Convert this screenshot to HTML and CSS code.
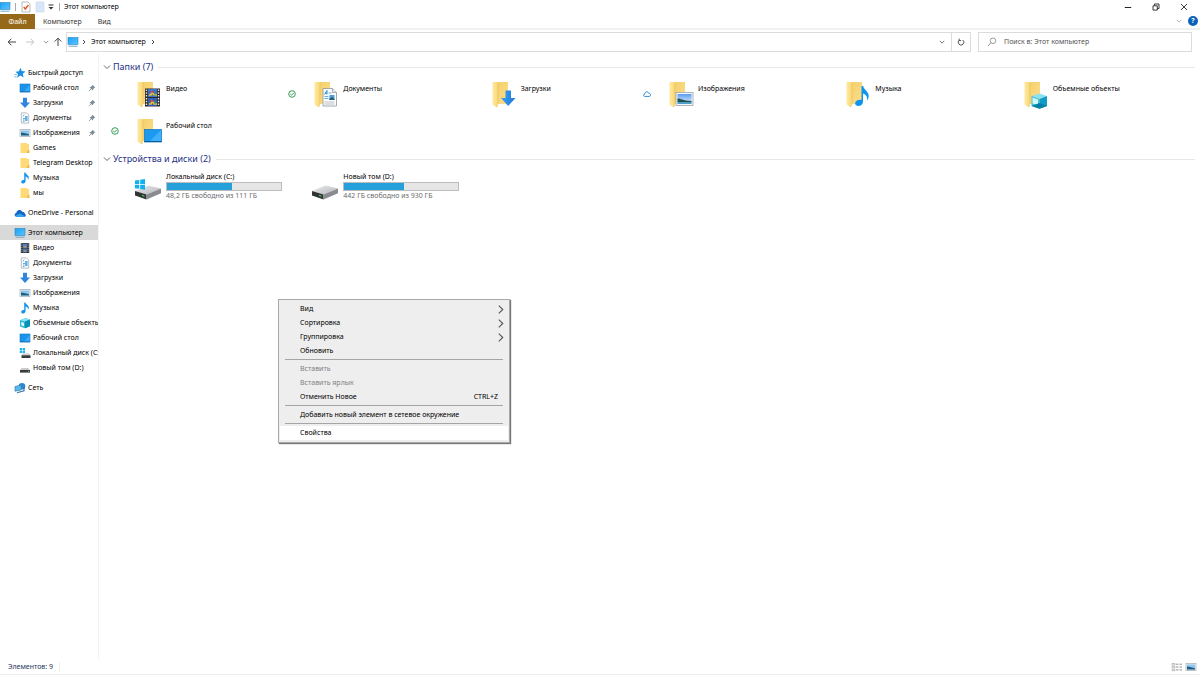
FILE: index.html
```html
<!DOCTYPE html>
<html lang="ru">
<head>
<meta charset="utf-8">
<title>Этот компьютер</title>
<link rel="stylesheet" href="styles.css">
</head>
<body>
<svg class="defs" aria-hidden="true">
  <defs>
    <linearGradient id="g-screen" x1="0" y1="0" x2="1" y2="1"><stop offset="0" stop-color="#18a0f5"/><stop offset="1" stop-color="#5cc6ff"/></linearGradient>
    <linearGradient id="g-flap" x1="0" y1="0" x2="1" y2="0"><stop offset="0" stop-color="#ffe9a3"/><stop offset="1" stop-color="#fbd775"/></linearGradient>
    <linearGradient id="g-back" x1="0" y1="0" x2="1" y2="1"><stop offset="0" stop-color="#f3cf6a"/><stop offset="1" stop-color="#fddf8b"/></linearGradient>
    <linearGradient id="g-drive" x1="0" y1="0" x2="1" y2="1"><stop offset="0" stop-color="#e9eaec"/><stop offset="1" stop-color="#b4b6ba"/></linearGradient>
    <linearGradient id="g-sky" x1="0" y1="0" x2="0" y2="1"><stop offset="0" stop-color="#5b9cf0"/><stop offset="1" stop-color="#e6f4fb"/></linearGradient>
    <linearGradient id="g-arrow" x1="0" y1="0" x2="1" y2="0"><stop offset="0" stop-color="#3aa0f3"/><stop offset="1" stop-color="#1f7ad6"/></linearGradient>
  </defs>
  <symbol id="pc" viewBox="0 0 12 10"><rect x="1" y=".5" width="10" height="7" fill="url(#g-screen)" stroke="#2c86bb" stroke-width=".6"/><path d="M1.500 9.200h9" stroke="#6fa7c8" stroke-width="1"/></symbol>
  <symbol id="star" viewBox="0 0 10 10"><path d="M5.400.6 6.500 3.400 9.600 3.700 7.300 5.700 8 8.700 5.300 7.100 2.600 8.900 3.300 5.800 1.200 3.900 4.100 3.500z" fill="#1c8fe3"/><path d="M.4 6.300h2M.2 8.200h2" stroke="#6bb8ef" stroke-width=".8"/></symbol>
  <symbol id="desktop" viewBox="0 0 12 10"><rect x="1" y="1" width="10" height="8" fill="#1b93ea" stroke="#1178c8" stroke-width=".6"/><path d="M5 8.500 10.700 2v6.500z" fill="#3aaaf6"/><path d="M1 8.800h10" stroke="#0b5fa5" stroke-width=".6"/></symbol>
  <symbol id="down" viewBox="0 0 12 12"><path d="M4 .8h4v4.700h3L6 11 1 5.500h3z" fill="#2f86dc"/></symbol>
  <symbol id="doc" viewBox="0 0 12 12"><path d="M2.300.9h5.400l2 2v8.200H2.300z" fill="#fff" stroke="#97a0a8" stroke-width=".7"/><path d="M4 4.500 5.200 2.600M4 6.500h4M4 8h1.500M4 9.500h1.500" stroke="#3794d1" stroke-width=".8"/><rect x="6" y="4" width="2.600" height="5" fill="#65b3e4"/></symbol>
  <symbol id="image" viewBox="0 0 12 10"><rect x="1" y="1.400" width="10" height="7.200" fill="#f4f6f8" stroke="#a3acb3" stroke-width=".7"/><rect x="2" y="2.400" width="8" height="5.200" fill="#8fc6ef"/><path d="M2 4.600 5 4.900l5 1.400v1.200H2z" fill="#1e5874"/><path d="M2 6.900h8v.7H2z" fill="#5fa4c6"/></symbol>
  <symbol id="folder" viewBox="0 0 12 12"><path d="M1.500 1H8v1h2v9H1.500z" fill="#ffda77"/><path d="M9 8h1.500v3H7.500z" fill="#eebc4b"/></symbol>
  <symbol id="music" viewBox="0 0 12 12"><path d="M5.200.6h1.200c.4 2 3.400 2.700 3.400 5 0 1-.4 1.700-.9 2.300.3-2-.7-3-2.300-3.400V9c0 1.500-1.200 2.400-2.500 2.400-1.200 0-1.900-.6-1.900-1.500C2.200 8.500 3.900 7.800 5.200 8.100z" fill="#1594ee"/></symbol>
  <symbol id="video" viewBox="0 0 12 12"><rect x="1.800" y="1" width="8.400" height="10" fill="#343434"/><rect x="3.800" y="1.700" width="4.400" height="4" fill="#547fc2"/><rect x="3.800" y="6.400" width="4.400" height="4" fill="#416cb0"/><path d="M4.500 5h3M4.500 9h3" stroke="#dfb04c"/><path d="M2.800 1.500v9M9.200 1.500v9" stroke="#c8ced5" stroke-width=".8" stroke-dasharray=".9 .9"/></symbol>
  <symbol id="cloud" viewBox="0 0 12 10"><path d="M2.700 8.800C.2 8.800-.1 5.400 2.300 4.900 2.600 1.700 6.800.9 8.200 3.700c2 0 2.600 1.100 2.700 2 1.500.8 1 3.100-.8 3.100z" fill="#1168c4"/><path d="M1.200 7.700 6 5.600l4.800 2.600c-.2.400-.5.600-.9.600H2.700c-.7 0-1.200-.5-1.500-1.100z" fill="#35a3ee"/></symbol>
  <symbol id="cube" viewBox="0 0 12 12"><path d="M1 3.200 6.500 1 11 2.500v6.700L6 11.300 1 9.500z" fill="#27b6d3"/><path d="M1 3.200 6.500 1 11 2.500 6 4.500z" fill="#8be4f2"/><path d="M6 4.500 11 2.500v6.700L6 11.300z" fill="#0a8fb5"/><path d="M2.200 5 5 5.800v3.400l-2.800-.7z" fill="#d8f7fb"/></symbol>
  <symbol id="disk" viewBox="0 0 12 12"><path d="M2.500 6h7l1.500 2.500H1z" fill="#c8cacc"/><rect x="1" y="8" width="10" height="2.600" fill="#373b3d"/><circle cx="9.500" cy="9.300" r=".6" fill="#5fdd5f"/></symbol>
  <symbol id="sysdisk" viewBox="0 0 12 12"><path d="M.8 1h2.300v2.200H.8zM3.700 1H6v2.200H3.700zM.8 3.800h2.300V6H.8zM3.700 3.800H6V6H3.700z" fill="#18b1ef"/><path d="M3.500 6.500h6.700l1.300 2H2.500z" fill="#c8cacc"/><rect x="2.500" y="8.300" width="9" height="2.700" fill="#373b3d"/></symbol>
  <symbol id="net" viewBox="0 0 12 12"><circle cx="8" cy="4.200" r="3.300" fill="#2b89d0"/><path d="M1 4.500 7.200 3v5L1 9.200z" fill="#57b9ed" stroke="#2674a8" stroke-width=".6"/><path d="M3 10.800 10 8.700V5.200" fill="none" stroke="#397ba9" stroke-width="1.200"/></symbol>
  <symbol id="pin" viewBox="0 0 8 8"><path d="M4.500.7 7.300 3.500 6.500 3.800 5.100 5.200 4.800 6.600 1.400 3.200 2.800 2.900 4.200 1.500z" fill="#7d8e99"/><path d="M3 5 .9 7.100" stroke="#7d8e99" stroke-width=".8"/></symbol>
  <symbol id="chev-d" viewBox="0 0 8 8"><path d="M1 2.500 4 5.500 7 2.500" fill="none" stroke="currentColor"/></symbol>
  <symbol id="chev-r" viewBox="0 0 8 8"><path d="M2.500.5 6 4 2.500 7.500" fill="none" stroke="currentColor"/></symbol>
  <symbol id="chev-s" viewBox="0 0 6 6"><path d="M2 1 4 3 2 5" fill="none" stroke="currentColor"/></symbol>
  <symbol id="synced" viewBox="0 0 8 8"><circle cx="4" cy="4" r="3.300" fill="#fff" stroke="#219441" stroke-width=".9"/><path d="M2.300 4 3.600 5.200 5.800 2.900" fill="none" stroke="#219441" stroke-width=".9"/></symbol>
  <symbol id="online" viewBox="0 0 8 8"><path d="M2 6.400C.2 6.400.1 4.200 1.700 4 1.900 1.400 4.900 1 5.600 3.200 8.200 3.100 8.200 6.400 6.100 6.400z" fill="#fff" stroke="#1c7fd0" stroke-width=".9"/></symbol>
  <symbol id="big-folder" viewBox="0 0 28 28"><path d="M9 1h10v22H7z" fill="url(#g-back)"/><path d="M3.500 1H9v21l-1.200 4.500-4.300-3z" fill="url(#g-flap)"/><path d="M9 2v20l-1.200 4" fill="none" stroke="#e6bd58" stroke-width=".6"/></symbol>
  <symbol id="big-drive" viewBox="0 0 28 28"><path d="M1 17 14.500 11.500 27 14.500 12.500 20.500z" fill="url(#g-drive)"/><path d="M1 17 12.500 20.500v5L1 21.500z" fill="#303234"/><path d="M12.500 20.500 27 14.500v4.700l-14.500 6.300z" fill="#898b90"/><path d="M8 21.400 10.500 22.200" stroke="#42ce52" stroke-width="1.200"/></symbol>
</svg>

<header class="titlebar">
  <svg class="ic app"><use href="#pc"/></svg>
  <span class="bar"></span>
  <svg class="ic check" viewBox="0 0 12 12"><path d="M2 1h6l2 2v8H2z" fill="#fff" stroke="#9b9fa4" stroke-width=".7"/><path d="M3.700 6 5.300 8 8.400 4" fill="none" stroke="#e0582d" stroke-width="1.400"/></svg>
  <svg class="ic" viewBox="0 0 12 12"><path d="M2 1h8v10H2z" fill="#d8e6f8" stroke="#c6d6ea" stroke-width=".6"/></svg>
  <svg class="mini" viewBox="0 0 8 8"><path d="M1.500 2h5" stroke="#333"/><path d="M1.500 4h5L4 6.500z" fill="#333"/></svg>
  <span class="bar"></span>
  <h1 class="title">Этот компьютер</h1>
  <div class="window-buttons">
    <button aria-label="Свернуть"><svg viewBox="0 0 8 8"><path d="M.8 4.500h6.400" stroke="#222"/></svg></button>
    <button aria-label="Свернуть в окно"><svg viewBox="0 0 8 8"><path d="M1 2.800h4.300v4.300H1zM2.500 2.500V1H7v4.500H5.500" fill="none" stroke="#222" stroke-width=".9"/></svg></button>
    <button aria-label="Закрыть"><svg viewBox="0 0 8 8"><path d="M1 1 7 7M7 1 1 7" stroke="#222" stroke-width=".9"/></svg></button>
  </div>
</header>

<nav class="ribbon">
  <button class="tab file">Файл</button>
  <button class="tab">Компьютер</button>
  <button class="tab">Вид</button>
  <div class="ribbon-end">
    <button class="expand" aria-label="Развернуть ленту"><svg class="tiny"><use href="#chev-d"/></svg></button>
    <button class="help" aria-label="Справка">?</button>
  </div>
</nav>

<div class="toolbar">
  <div class="history">
    <button aria-label="Назад"><svg viewBox="0 0 10 10"><path d="M9 5H1.200M4.300 1.700 1.200 5 4.300 8.300" fill="none" stroke="#444"/></svg></button>
    <button aria-label="Вперед"><svg viewBox="0 0 10 10"><path d="M1 5h7.800M5.700 1.700 8.800 5 5.700 8.300" fill="none" stroke="#c6c6c6"/></svg></button>
    <button class="recent" aria-label="Последние"><svg class="tiny"><use href="#chev-d"/></svg></button>
    <button aria-label="Вверх"><svg viewBox="0 0 10 10"><path d="M5 9V1.200M1.700 4.500 5 1.200 8.300 4.500" fill="none" stroke="#444"/></svg></button>
  </div>
  <div class="address">
    <svg class="ic"><use href="#pc"/></svg>
    <svg class="tiny"><use href="#chev-s"/></svg>
    <a class="crumb" href="#">Этот компьютер</a>
    <svg class="tiny"><use href="#chev-s"/></svg>
    <button class="drop" aria-label="Предыдущие расположения"><svg class="tiny"><use href="#chev-d"/></svg></button>
    <button class="refresh" aria-label="Обновить"><svg viewBox="0 0 8 8"><path d="M5.800 2.100A2.800 2.800 0 1 1 2.400 2M2.200.6v2h2" fill="none" stroke="#444" stroke-width=".9"/></svg></button>
  </div>
  <label class="search">
    <svg viewBox="0 0 10 10"><circle cx="6" cy="3.800" r="2.800" fill="none" stroke="#777" stroke-width=".7"/><path d="M4 5.800 1 9" stroke="#777" stroke-width=".8"/></svg>
    <input type="search" aria-label="Поиск" placeholder="Поиск в: Этот компьютер">
  </label>
</div>

<div class="body">
  <aside class="tree">
    <div class="branch">
      <a class="node root" href="#"><svg class="ic"><use href="#star"/></svg><span>Быстрый доступ</span></a>
      <a class="node" href="#"><svg class="ic"><use href="#desktop"/></svg><span>Рабочий стол</span><svg class="pin"><use href="#pin"/></svg></a>
      <a class="node" href="#"><svg class="ic"><use href="#down"/></svg><span>Загрузки</span><svg class="pin"><use href="#pin"/></svg></a>
      <a class="node" href="#"><svg class="ic"><use href="#doc"/></svg><span>Документы</span><svg class="pin"><use href="#pin"/></svg></a>
      <a class="node" href="#"><svg class="ic"><use href="#image"/></svg><span>Изображения</span><svg class="pin"><use href="#pin"/></svg></a>
      <a class="node" href="#"><svg class="ic"><use href="#folder"/></svg><span>Games</span></a>
      <a class="node" href="#"><svg class="ic"><use href="#folder"/></svg><span>Telegram Desktop</span></a>
      <a class="node" href="#"><svg class="ic"><use href="#music"/></svg><span>Музыка</span></a>
      <a class="node" href="#"><svg class="ic"><use href="#folder"/></svg><span>мы</span></a>
    </div>
    <div class="branch">
      <a class="node root" href="#"><svg class="ic"><use href="#cloud"/></svg><span>OneDrive - Personal</span></a>
    </div>
    <div class="branch">
      <a class="node root selected" href="#"><svg class="ic"><use href="#pc"/></svg><span>Этот компьютер</span></a>
      <a class="node" href="#"><svg class="ic"><use href="#video"/></svg><span>Видео</span></a>
      <a class="node" href="#"><svg class="ic"><use href="#doc"/></svg><span>Документы</span></a>
      <a class="node" href="#"><svg class="ic"><use href="#down"/></svg><span>Загрузки</span></a>
      <a class="node" href="#"><svg class="ic"><use href="#image"/></svg><span>Изображения</span></a>
      <a class="node" href="#"><svg class="ic"><use href="#music"/></svg><span>Музыка</span></a>
      <a class="node" href="#"><svg class="ic"><use href="#cube"/></svg><span>Объемные объекты</span></a>
      <a class="node" href="#"><svg class="ic"><use href="#desktop"/></svg><span>Рабочий стол</span></a>
      <a class="node" href="#"><svg class="ic"><use href="#sysdisk"/></svg><span>Локальный диск (C:)</span></a>
      <a class="node" href="#"><svg class="ic"><use href="#disk"/></svg><span>Новый том (D:)</span></a>
    </div>
    <div class="branch">
      <a class="node root" href="#"><svg class="ic"><use href="#net"/></svg><span>Сеть</span></a>
    </div>
  </aside>

  <main class="content">
    <section>
      <h2 class="group"><svg class="mini"><use href="#chev-d"/></svg>Папки (7)</h2>
      <div class="grid">
        <a class="tile" href="#"><span class="state"></span>
          <svg class="big" viewBox="0 0 28 28"><use href="#big-folder"/><rect x="11" y="7.500" width="15" height="18" fill="#2b2b2f"/><rect x="14" y="8" width="9" height="8" fill="#3e70c8"/><rect x="14" y="17" width="9" height="8" fill="#3260b6"/><path d="M15 14h2l1-3 2 3h3M15 23h2l1-3 2 3h3" fill="none" stroke="#f1c232" stroke-width="1.500"/><path d="M17 11h3M16 20h3" stroke="#cf3c37" stroke-width="1.500"/><path d="M21 12v3M21 20v3" stroke="#47a355" stroke-width="1.200"/><path d="M12.500 8.500v16.500M24.500 8.500v16.500" stroke="#e8e8e8" stroke-width="1.400" stroke-dasharray="1.500 1.300"/></svg>
          <span class="name">Видео</span></a>
        <a class="tile" href="#"><span class="state"><svg><use href="#synced"/></svg></span>
          <svg class="big" viewBox="0 0 28 28"><use href="#big-folder"/><path d="M12 7.500h9.500l4 4V25H12z" fill="#fdfdfe" stroke="#8e9499" stroke-width=".8"/><path d="M21.500 7.500v4h4" fill="#e5e8ea" stroke="#8e9499" stroke-width=".7"/><path d="M13.500 13.500 16 9.500v4M14 12.200h2" fill="none" stroke="#2f8fd6" stroke-width="1"/><path d="M17.500 12h3M13.500 15.500h4M13.500 17.500h4" stroke="#51a5df" stroke-width=".9"/><rect x="18.500" y="14" width="5" height="5" fill="#4e9fd5"/><path d="M18.500 17.500 21 16l2.500 2v1h-5z" fill="#285c77"/><path d="M13.500 21h10M13.500 23h10" stroke="#a7adb2" stroke-width=".8"/></svg>
          <span class="name">Документы</span></a>
        <a class="tile" href="#"><span class="state"></span>
          <svg class="big" viewBox="0 0 28 28"><use href="#big-folder"/><path d="M16.500 9.500H22V17h4.500L19.200 25 12 17h4.500z" fill="url(#g-arrow)"/></svg>
          <span class="name">Загрузки</span></a>
        <a class="tile" href="#"><span class="state"><svg><use href="#online"/></svg></span>
          <svg class="big" viewBox="0 0 28 28"><use href="#big-folder"/><rect x="10" y="11.500" width="17" height="13" fill="#f4f7fa" stroke="#9ba5ae" stroke-width=".8"/><rect x="11.500" y="13" width="14" height="10" fill="url(#g-sky)"/><path d="M11.500 17.500c3 0 5 2 14 2.500v1.500h-14z" fill="#234f50"/><path d="M11.500 21h14v2h-14z" fill="#4c9fc6"/></svg>
          <span class="name">Изображения</span></a>
        <a class="tile" href="#"><span class="state"></span>
          <svg class="big" viewBox="0 0 28 28"><use href="#big-folder"/><path d="M18.500 5h1.700c.6 4 5.500 5.500 5.500 10 0 2-.7 3.200-1.700 4.500.7-3.600-1-6-4-6.900v8.200c0 2.600-2 4.200-4.400 4.200-2.200 0-3.500-1.100-3.500-2.700 0-2.400 2.800-4 6.400-3.500z" fill="#0f95ef"/></svg>
          <span class="name">Музыка</span></a>
        <a class="tile" href="#"><span class="state"></span>
          <svg class="big" viewBox="0 0 28 28"><use href="#big-folder"/><path d="M10.500 15 18.500 12.500 26 15 18.500 18z" fill="#8ce1ee"/><path d="M10.500 15 18.500 18v9.800l-8-2.800z" fill="#39c4dc"/><path d="M18.500 18 26 15v10l-7.500 2.800z" fill="#109bc4"/><path d="M11.500 16.500 17 18.500V24l-5.500-1.500z" fill="#d2f5fa"/><path d="M10.500 25 18.500 22 26 25l-7.500 2.800z" fill="#087fa6"/></svg>
          <span class="name">Объемные объекты</span></a>
        <a class="tile" href="#"><span class="state"><svg><use href="#synced"/></svg></span>
          <svg class="big" viewBox="0 0 28 28"><use href="#big-folder"/><rect x="10.500" y="11.500" width="17" height="12.500" fill="#1c9af0" stroke="#0d72bd" stroke-width=".7"/><path d="M16 23 27 12v11z" fill="#3fb0fa"/><path d="M10.500 23.500h17" stroke="#0c5c9b"/></svg>
          <span class="name">Рабочий стол</span></a>
      </div>
    </section>
    <section>
      <h2 class="group"><svg class="mini"><use href="#chev-d"/></svg>Устройства и диски (2)</h2>
      <div class="grid drives">
        <a class="tile" href="#"><span class="state"></span>
          <svg class="big" viewBox="0 0 28 28"><use href="#big-drive"/><path d="M1 6.500 5.300 5.900v4H1zM6.200 5.800 11 5v4.900H6.200zM1 10.800h4.300v4L1 14.300zM6.200 10.800H11v5l-4.800-.8z" fill="#13b0ef"/></svg>
          <span class="name">Локальный диск (C:)
            <span class="usage" role="progressbar" aria-label="Занято" aria-valuenow="57"><span style="width:57%"></span></span>
            <small>48,2 ГБ свободно из 111 ГБ</small></span></a>
        <a class="tile" href="#"><span class="state"></span>
          <svg class="big" viewBox="0 0 28 28"><use href="#big-drive"/></svg>
          <span class="name">Новый том (D:)
            <span class="usage" role="progressbar" aria-label="Занято" aria-valuenow="52"><span style="width:52%"></span></span>
            <small>442 ГБ свободно из 930 ГБ</small></span></a>
      </div>
    </section>
  </main>
</div>

<footer class="status">
  <span class="count">Элементов: 9</span>
  <div class="views">
    <button aria-label="Таблица"><svg viewBox="0 0 12 10"><path d="M1 1.500h3v1.500H1zM1 4.300h3v1.500H1zM1 7.200h3v1.500H1z" fill="none" stroke="#999" stroke-width=".6"/><path d="M5 2.200h2.500M5 5h2.500M5 7.900h2.500M8.500 2.200H11M8.500 5H11M8.500 7.900H11" stroke="#888" stroke-width=".9"/></svg></button>
    <button aria-label="Крупные значки"><svg><use href="#image"/></svg></button>
  </div>
</footer>

<div class="menu" role="menu">
  <button role="menuitem">Вид<svg class="sub"><use href="#chev-r"/></svg></button>
  <button role="menuitem">Сортировка<svg class="sub"><use href="#chev-r"/></svg></button>
  <button role="menuitem">Группировка<svg class="sub"><use href="#chev-r"/></svg></button>
  <button role="menuitem">Обновить</button>
  <hr>
  <button role="menuitem" disabled>Вставить</button>
  <button role="menuitem" disabled>Вставить ярлык</button>
  <button role="menuitem">Отменить Новое<kbd>CTRL+Z</kbd></button>
  <hr>
  <button role="menuitem">Добавить новый элемент в сетевое окружение</button>
  <hr>
  <button role="menuitem" class="hover">Свойства</button>
</div>
</body>
</html>
```

FILE: styles.css
```css
* { box-sizing: border-box; }
body {
  margin: 0;
  min-height: 100vh;
  display: flex;
  flex-direction: column;
  background: #fff;
  color: #000;
  font: 7px/10px "Noto Sans", "Open Sans", sans-serif;
}
svg { display: block; flex: none; }
.defs { position: absolute; width: 0; height: 0; }
button {
  display: flex;
  align-items: center;
  justify-content: center;
  border: 0;
  padding: 0;
  background: none;
  color: inherit;
  font: inherit;
}
a { color: inherit; text-decoration: none; }
.ic { width: 12px; height: 12px; }
.mini { width: 8px; height: 8px; }
.tiny { width: 6px; height: 6px; }

.titlebar { display: flex; align-items: center; height: 14px; }
.titlebar .bar { width: 1px; height: 8px; margin: 0 4px; background: #aaa; }
.titlebar .check { margin-right: 2px; }
.titlebar .mini { margin-left: 1px; }
.titlebar .app { margin-left: -1px; }
.title { margin: 0; font-size: 7px; font-weight: 400; }
.window-buttons { display: flex; margin-left: auto; padding-right: 2px; }
.window-buttons button { width: 28px; height: 14px; }
.window-buttons svg { width: 8px; height: 8px; }

.ribbon { display: flex; height: 16px; border-bottom: 2px solid #f1f1f1; color: #333; }
.tab { height: 15px; padding: 0 8px; }
.tab.file { width: 35px; background: #956919; color: #fff; }
.ribbon-end { display: flex; align-items: center; gap: 6px; margin-left: auto; padding-right: 2px; color: #999; }
.help { width: 10px; height: 10px; border-radius: 50%; background: #0a63b8; color: #fff; font-weight: 700; }

.toolbar { display: flex; align-items: center; gap: 7px; padding: 2px 8px 2px 7px; }
.history { display: flex; align-items: center; gap: 8px; }
.history svg { width: 10px; height: 10px; }
.history .recent { width: 5px; color: #777; }
.history .recent svg { width: 6px; height: 6px; }
.history .recent + button { margin-left: -3px; }
.address {
  flex: 1;
  display: flex;
  align-items: center;
  gap: 2px;
  height: 20px;
  margin-left: -4px;
  border: 1px solid #dcdcdc;
  color: #444;
}
.crumb { margin: 0 2px; color: #000; }
.address .drop { width: 18px; margin-left: auto; margin-right: -2px; }
.refresh { width: 19px; height: 18px; border-left: 1px solid #dcdcdc; }
.refresh svg { width: 8px; height: 8px; }
.search {
  display: flex;
  align-items: center;
  gap: 7px;
  width: 214px;
  height: 20px;
  padding-left: 8px;
  border: 1px solid #dcdcdc;
}
.search svg { width: 10px; height: 10px; }
.search input { flex: 1; min-width: 0; border: 0; padding: 0; outline: 0; font: inherit; }
.search input::placeholder { color: #555; opacity: 1; }

.body { flex: 1; display: flex; }
.tree {
  width: 99px;
  padding: 11px 0 0;
  border-right: 1px solid #f3f3f3;
}
.branch { margin-bottom: 5px; }
.node {
  display: flex;
  align-items: center;
  gap: 2px;
  height: 15px;
  padding-left: 19px;
  overflow: hidden;
  white-space: nowrap;
}
.node.root { padding-left: 14px; }
.node.selected { background: #d9d9d9; }
.pin { width: 8px; height: 8px; margin: 0 2px 0 auto; }

.content { flex: 1; padding: 6px 5px 0 4px; }
.group {
  display: flex;
  align-items: center;
  gap: 2px;
  margin: 0;
  color: #1e3287;
  font-size: 9px;
  font-weight: 400;
  line-height: 14px;
}
.group svg { color: #666; }
.group::after { content: ""; flex: 1; height: 1px; margin-left: 3px; background: #e8e8e8; }
.grid {
  display: grid;
  grid-template-columns: repeat(6, 1fr);
  row-gap: 1px;
  padding: 5px 20px 0 8px;
}
.tile { display: flex; height: 36px; padding-top: 2px; }
.state { width: 8px; margin-right: 15px; padding-top: 9px; }
.state svg { width: 8px; height: 8px; }
.big { width: 28px; height: 28px; }
.name { width: 116px; margin-left: 4px; padding-top: 3px; white-space: nowrap; }
.drives { padding-top: 1px; }
.drives .big { margin-top: 5px; }
.usage { display: block; height: 9px; border: 1px solid #bcbcbc; background: #e6e6e6; }
.usage span { display: block; height: 7px; background: #26a0da; }
.name small { display: block; color: #6d6d6d; font-size: 7px; }

.status {
  display: flex;
  align-items: center;
  height: 16px;
  padding: 0 3px 0 8px;
  border-bottom: 1px solid #eee;
  color: #1e395b;
}
.count { padding-right: 6px; border-right: 1px solid #eee; }
.views { display: flex; gap: 2px; margin-left: auto; }
.views svg { width: 12px; height: 10px; }

.menu {
  position: absolute;
  left: 278px;
  top: 299px;
  width: 232px;
  padding: 2px 1px;
  border: 1px solid #a8a8a8;
  background: #eee;
  box-shadow: 1px 1px 1px #777;
}
.menu button { width: 100%; height: 14px; justify-content: flex-start; padding: 0 3px 0 20px; white-space: nowrap; }
.menu button:disabled { color: #808080; }
.menu .hover { background: #fff; }
.menu .sub { width: 9px; height: 9px; margin-left: auto; color: #555; }
.menu kbd { margin: 0 7px 0 auto; font: inherit; }
.menu hr { height: 1px; margin: 1px 5px 2px; border: 0; background: #a5a5a5; }
```
